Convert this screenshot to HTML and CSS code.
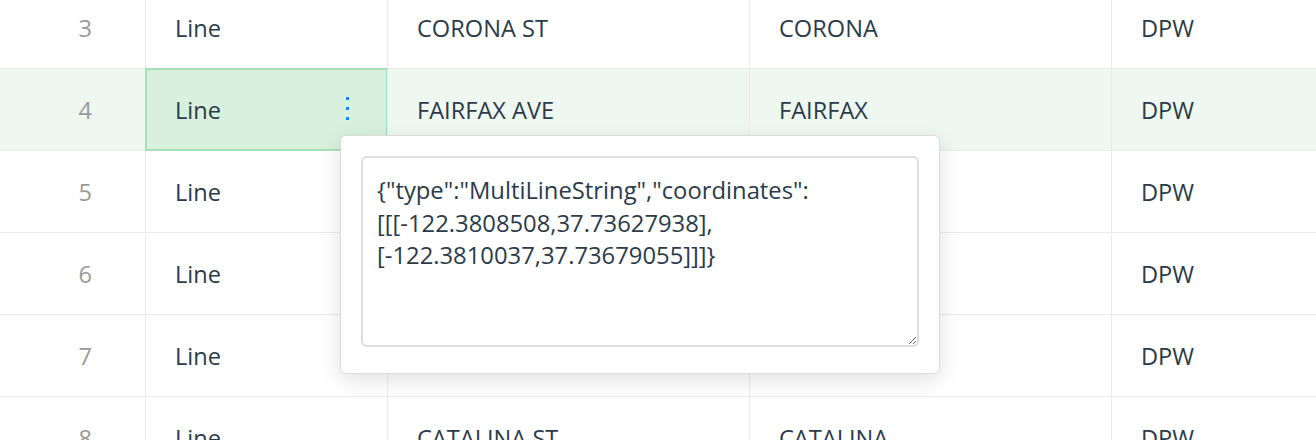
FILE: index.html
```html
<!DOCTYPE html>
<html>
<head>
<meta charset="utf-8">
<link rel="stylesheet" href="styles.css">
</head>
<body>
<div class="viewport">
  <div class="table">
    <div class="row">
      <div class="cell num">3</div>
      <div class="cell">Line</div>
      <div class="cell">CORONA ST</div>
      <div class="cell">CORONA</div>
      <div class="cell">DPW</div>
    </div>
    <div class="row active">
      <div class="cell num">4</div>
      <div class="cell selected">Line
        <svg class="dots" width="3" height="23" viewBox="0 0 3 23"><rect x="0" y="0" width="3" height="3"/><rect x="0" y="10" width="3" height="3"/><rect x="0" y="20" width="3" height="3"/></svg>
      </div>
      <div class="cell">FAIRFAX AVE</div>
      <div class="cell">FAIRFAX</div>
      <div class="cell">DPW</div>
    </div>
    <div class="row">
      <div class="cell num">5</div>
      <div class="cell">Line</div>
      <div class="cell">ELMIRA ST</div>
      <div class="cell">ELMIRA</div>
      <div class="cell">DPW</div>
    </div>
    <div class="row">
      <div class="cell num">6</div>
      <div class="cell">Line</div>
      <div class="cell">QUINT ST</div>
      <div class="cell">QUINT</div>
      <div class="cell">DPW</div>
    </div>
    <div class="row">
      <div class="cell num">7</div>
      <div class="cell">Line</div>
      <div class="cell">REVERE AVE</div>
      <div class="cell">REVERE</div>
      <div class="cell">DPW</div>
    </div>
    <div class="row">
      <div class="cell num">8</div>
      <div class="cell">Line</div>
      <div class="cell">CATALINA ST</div>
      <div class="cell">CATALINA</div>
      <div class="cell">DPW</div>
    </div>
  </div>
  <div class="popup">
    <textarea class="editor" spellcheck="false">{"type":"MultiLineString","coordinates":
[[[-122.3808508,37.73627938],
[-122.3810037,37.73679055]]]}</textarea>
  </div>
</div>
</body>
</html>
```

FILE: styles.css
```css
html, body {
  margin: 0;
  padding: 0;
  background: #ffffff;
}
.viewport {
  position: relative;
  width: 1316px;
  height: 440px;
  overflow: hidden;
  font-family: "Open Sans", "Liberation Sans", sans-serif;
  font-size: 23.6px;
  color: #2c3b4a;
}
.table {
  margin-top: -13px;
  display: flex;
  flex-direction: column;
}
.row {
  display: grid;
  grid-template-columns: 145px 242px 362px 362px 1fr;
  height: 81px;
  border-bottom: 1px solid #ebebeb;
}
.row.active {
  background: #eef8f1;
}
.cell {
  display: flex;
  align-items: center;
  padding-left: 29px;
  border-left: 1px solid #ebebeb;
  position: relative;
}
.cell.num {
  border-left: none;
  justify-content: flex-end;
  padding-left: 0;
  padding-right: 53px;
  color: #9a9a9a;
}
.cell.selected {
  background: #d7f1de;
}
.cell.selected::after {
  content: "";
  position: absolute;
  top: -1px;
  left: -1px;
  right: -1px;
  bottom: -1px;
  border: 2px solid #a8e0b5;
}
.dots {
  position: absolute;
  right: 38px;
  top: 28px;
  fill: #1a82ff;
}
.popup {
  position: absolute;
  left: 340px;
  top: 135px;
  width: 558px;
  padding: 20px 20px 26px;
  background: #ffffff;
  border: 1px solid #dcdcdc;
  border-radius: 6px;
  box-shadow: 0 6px 22px rgba(0, 0, 0, 0.12);
}
.editor {
  display: block;
  box-sizing: border-box;
  width: 558px;
  height: 191px;
  margin: 0;
  padding: 16px 14px;
  border: 2px solid #dedede;
  border-radius: 6px;
  font-family: "Open Sans", "Liberation Sans", sans-serif;
  font-size: 23.8px;
  line-height: 32.5px;
  color: #2c3b4a;
  background: #ffffff;
  outline: none;
  resize: both;
}
```
